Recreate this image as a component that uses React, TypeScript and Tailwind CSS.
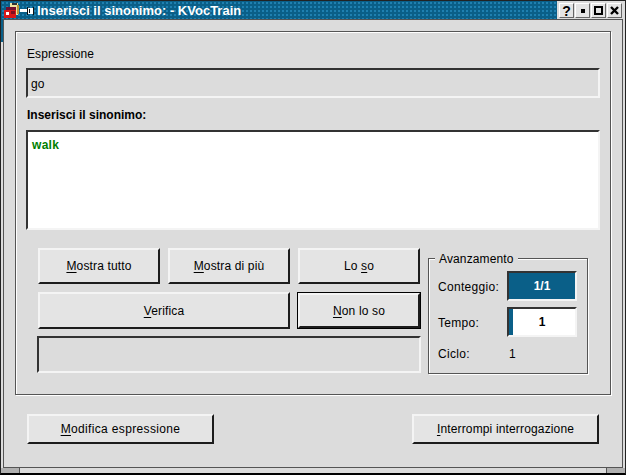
import React from 'react';

const FONT = "font-['Liberation_Sans',Arial,sans-serif]";

function Mnemonic({ before = '', letter, after }: { before?: string; letter: string; after: string }) {
  return (
    <span>
      {before}
      <span className="underline underline-offset-2">{letter}</span>
      {after}
    </span>
  );
}

function PushButton({ className, children }: { className: string; children: React.ReactNode }) {
  return (
    <button className={`flex items-center justify-center bg-[#e4e4e4] border-t-2 border-l-2 border-t-[#f4f4f4] border-l-[#f4f4f4] border-b-2 border-r-2 border-b-[#1c1c1c] border-r-[#1c1c1c] text-xs tracking-[0.15px] text-black ${className}`}>
      {children}
    </button>
  );
}

function Sunken({ className, children }: { className: string; children?: React.ReactNode }) {
  return (
    <div className={`border-t-2 border-l-2 border-t-[#333] border-l-[#333] border-b-2 border-r-2 border-b-[#f4f4f4] border-r-[#f4f4f4] ${className}`}>
      {children}
    </div>
  );
}

function TitleButton({ children }: { children: React.ReactNode }) {
  return (
    <div className="flex h-[15px] w-[15px] items-center justify-center bg-[#e4e4e4] border-t border-l border-t-white border-l-white border-b border-r border-b-[#666] border-r-[#666]">
      {children}
    </div>
  );
}

export default function App() {
  return (
    <div className={`relative flex h-[475px] w-[626px] flex-col overflow-hidden bg-[#dcdcdc] border-t border-l border-r border-b-2 border-t-[#222] border-l-[#222] border-r-[#222] border-b-black ${FONT}`}>
      {/* title bar */}
      <div className="flex h-[18px] items-center bg-[#0a5f88] bg-[radial-gradient(#1f80b0_1px,transparent_1px)] bg-[length:4px_4px]">
        <svg width="15" height="15" viewBox="0 0 15 15" className="ml-[3px] mt-[1px]">
          <rect x="6" y="0" width="8" height="12" fill="#f0e4a0" />
          <rect x="8" y="0" width="5" height="2" fill="#333" />
          <rect x="13" y="2" width="2" height="9" fill="#b89838" />
          <rect x="2" y="4" width="10" height="3" fill="#701030" />
          <rect x="0" y="7" width="12" height="8" fill="#d81818" />
          <rect x="2" y="9" width="3" height="3" fill="#fff" />
          <rect x="7" y="8" width="4" height="3" fill="#801020" />
        </svg>
        <svg width="14" height="8" viewBox="0 0 14 8" className="ml-[1px] mt-[1px]">
          <path d="M0 2h7v3H0zM8 1h5v6H8z" fill="#fff" />
          <path d="M7 0h1v8H7zM13 0h1v8h-1zM9 2h1v4H9z" fill="#111" />
        </svg>
        <span className="ml-[3px] pt-[2px] text-[13px] font-bold text-white">Inserisci il sinonimo: - KVocTrain</span>
        <div className="ml-auto flex h-[18px] w-[68px] gap-[1px] bg-[#dcdcdc] pl-[2px] pt-[2px]">
          <TitleButton><span className="text-sm font-bold leading-none text-black">?</span></TitleButton>
          <TitleButton><div className="h-[4px] w-[4px] bg-black" /></TitleButton>
          <TitleButton><div className="h-[9px] w-[9px] border-2 border-black" /></TitleButton>
          <TitleButton>
            <svg width="9" height="9" viewBox="0 0 9 9"><path d="M1 1l7 7M8 1l-7 7" stroke="#000" strokeWidth="2.4" /></svg>
          </TitleButton>
        </div>
      </div>
      <div className="absolute left-0 top-[18px] h-[23px] w-[2px] bg-[#0a5f88]" />

      {/* client area */}
      <div className="px-[2px]">
        <div className="flex h-[449px] flex-col border border-[#555] px-[11px] pt-[11px]">
          <div className="flex h-[364px] w-[596px] flex-col border border-[#555] shadow-[inset_1px_1px_0_#fff,1px_1px_0_#fff] px-[10px] pt-[12px]">
            <div className="h-[20px] pl-[1px] text-xs leading-[20px] tracking-[0.1px] text-black">Espressione</div>
            <Sunken className="mt-[4px] flex h-[30px] w-[574px] items-center bg-[#dcdcdc] pl-[3px] pt-[2px]">
              <span className="text-xs text-black">go</span>
            </Sunken>
            <div className="mt-[9px] h-[16px] pl-[1px] text-xs font-bold leading-[16px] text-black">Inserisci il sinonimo:</div>
            <Sunken className="mt-[7px] h-[100px] w-[574px] bg-white px-[4px]">
              <span className="text-xs font-bold tracking-[0.3px] text-[#008000]">walk</span>
            </Sunken>

            <div className="mt-[18px] flex">
              <div className="ml-[11px] flex w-[384px] flex-col">
                <div className="ml-[1px] flex gap-[8px]">
                  <PushButton className="h-[36px] w-[122px]"><Mnemonic letter="M" after="ostra tutto" /></PushButton>
                  <PushButton className="h-[36px] w-[122px]"><Mnemonic letter="M" after="ostra di più" /></PushButton>
                  <PushButton className="h-[36px] w-[122px]"><Mnemonic before="Lo " letter="s" after="o" /></PushButton>
                </div>
                <div className="mt-[8px] ml-[1px] flex gap-[7px]">
                  <PushButton className="h-[37px] w-[252px]"><Mnemonic letter="V" after="erifica" /></PushButton>
                  <div className="h-[37px] w-[124px] border border-black">
                    <PushButton className="h-full w-full"><Mnemonic letter="N" after="on lo so" /></PushButton>
                  </div>
                </div>
                <Sunken className="mt-[7px] h-[37px] w-[384px] bg-[#dcdcdc]" />
              </div>

              {/* progress group */}
              <div className="relative mt-[10px] ml-[7px] h-[116px] w-[160px] border border-[#555] shadow-[inset_1px_1px_0_#fff,1px_1px_0_#fff] pl-[9px] pr-[10px]">
                <span className="absolute -top-[7px] left-[6px] bg-[#dcdcdc] px-[4px] text-xs leading-[14px] tracking-[0.13px] text-black">Avanzamento</span>
                <div className="mt-[12px] flex items-center justify-between">
                  <span className="pt-[2px] text-xs tracking-[0.3px] text-black">Conteggio:</span>
                  <Sunken className="flex h-[30px] w-[70px] items-center justify-center bg-[#0a5f88]">
                    <span className="text-xs font-bold text-white">1/1</span>
                  </Sunken>
                </div>
                <div className="mt-[6px] flex items-center justify-between">
                  <span className="pt-[2px] text-xs tracking-[0.3px] text-black">Tempo:</span>
                  <Sunken className="flex h-[30px] w-[70px] bg-white">
                    <div className="w-[4px] bg-[#0a5f88]" />
                    <span className="flex-1 pr-[4px] text-center text-xs font-bold leading-[26px] text-black">1</span>
                  </Sunken>
                </div>
                <div className="mt-[9px] flex text-xs tracking-[0.3px] text-black">
                  <span className="w-[71px]">Ciclo:</span>
                  <span>1</span>
                </div>
              </div>
            </div>
          </div>

          <div className="mt-[19px] flex justify-between px-[12px]">
            <PushButton className="h-[30px] w-[187px]"><span className="tracking-[0.35px]"><Mnemonic letter="M" after="odifica espressione" /></span></PushButton>
            <PushButton className="h-[30px] w-[187px]"><Mnemonic letter="I" after="nterrompi interrogazione" /></PushButton>
          </div>
        </div>
      </div>

      {/* resize grips */}
      <div className="flex flex-1 justify-between">
        <div className="w-[19px] border-r border-r-[#555] bg-[#b0b0b0]" />
        <div className="w-[19px] border-l border-l-[#555] bg-[#b0b0b0]" />
      </div>
    </div>
  );
}
